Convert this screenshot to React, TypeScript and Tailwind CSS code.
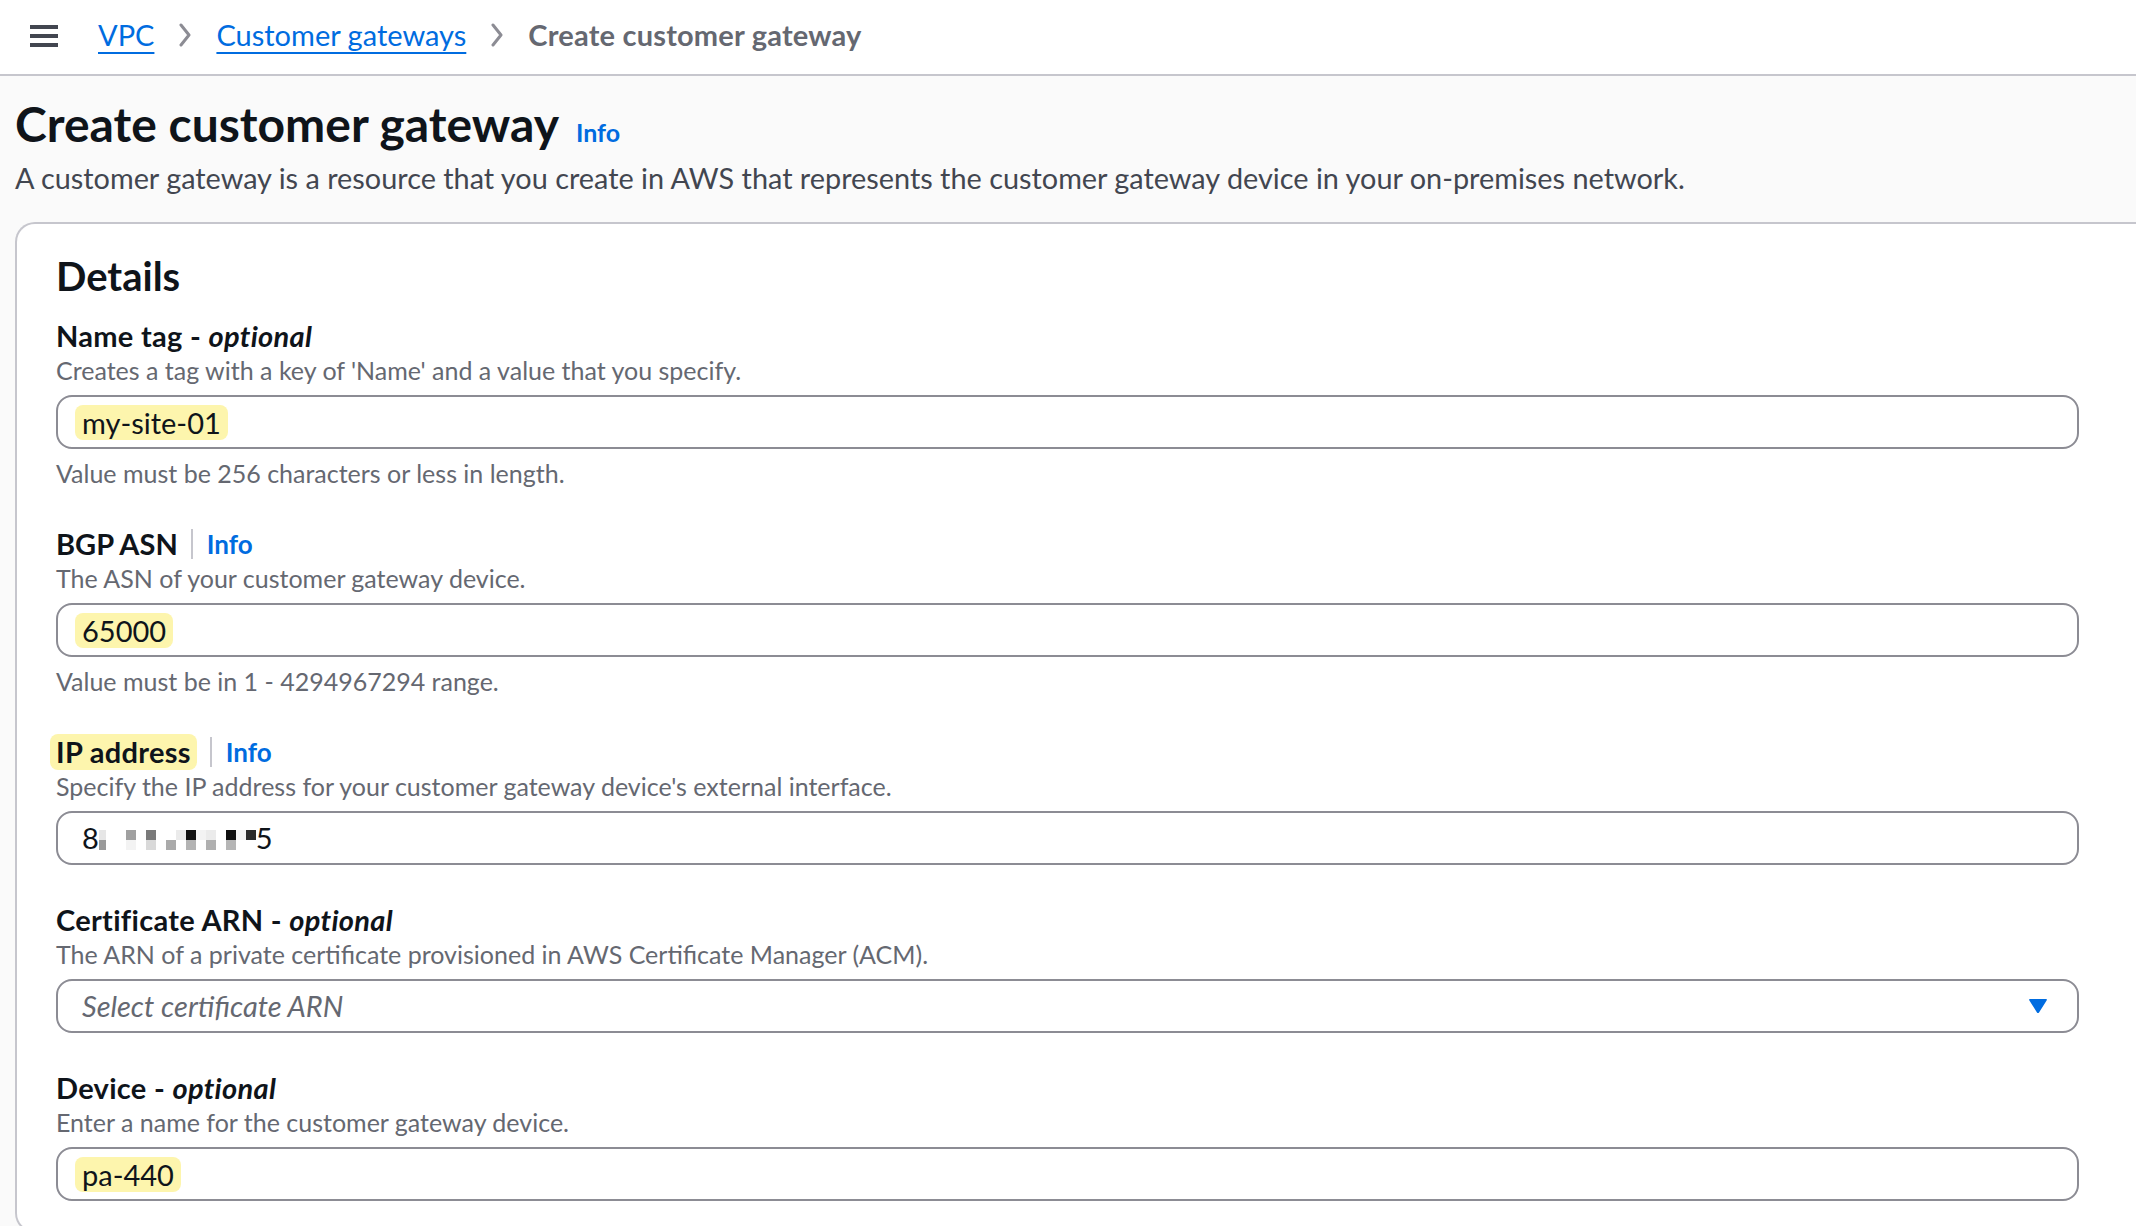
import React from "react";

const Chevron = () => (
  <svg width="14" height="24" viewBox="0 0 14 24" className="mx-[24px]" aria-hidden>
    <path d="M3 2 L11 12 L3 22" fill="none" stroke="#8c8c94" strokeWidth="3" strokeLinecap="round" strokeLinejoin="round" />
  </svg>
);

const Hl = ({ children }: { children: React.ReactNode }) => (
  <span className="bg-[#fdf5ad] rounded-[8px] px-[7px] leading-[35px]">{children}</span>
);

const Info = () => <span className="text-[26px] tracking-normal font-bold text-[#006ce0] leading-[36px]">Info</span>;

const Divider = () => <span className="inline-block w-[2px] h-[30px] bg-[#c6c6cd] ml-[13px] mr-[14px]" />;

const Label = ({ children }: { children: React.ReactNode }) => (
  <div className="flex items-center text-[29px] tracking-[0.3px] leading-[36px] font-bold text-[#0f141a] h-[36px]">{children}</div>
);

const Desc = ({ children }: { children: React.ReactNode }) => (
  <div className="text-[25px] leading-[32px] text-[#656871]">{children}</div>
);

const Input = ({ children }: { children: React.ReactNode }) => (
  <div className="mt-[9px] h-[54px] border-2 border-[#8c8c94] rounded-[16px] flex items-center pl-[17px] text-[29px] text-[#0f141a] bg-white">
    {children}
  </div>
);

const Constraint = ({ children }: { children: React.ReactNode }) => (
  <div className="mt-[8px] text-[25px] leading-[32px] text-[#656871]">{children}</div>
);

// mosaic columns: [x offset from start, top color, bottom color, width]
const mosaic: [number, string | null, string | null, number][] = [
  [0, "#e6e6e6", "#9a9a9a", 7],
  [27, "#a0a0a0", "#f3f3f3", 10],
  [47, "#7a7a7a", "#d9d9d9", 10],
  [67, null, "#aaaaaa", 10],
  [77, "#ebebeb", null, 10],
  [87, "#111111", "#b3b3b3", 10],
  [97, "#f3f3f3", null, 10],
  [107, "#ebebeb", "#b0b0b0", 10],
  [127, "#0f0f0f", "#b5b5b5", 10],
  [137, "#f3f3f3", null, 10],
  [147, "#2b2b2b", null, 10],
];

const Mosaic = () => (
  <span className="relative inline-block w-[157px] h-[20px] mt-[4px]">
    {mosaic.map(([x, t, b, w], i) => (
      <React.Fragment key={i}>
        {t && <span className="absolute top-0 h-[10px]" style={{ left: x, width: w, background: t }} />}
        {b && <span className="absolute top-[10px] h-[10px]" style={{ left: x, width: w, background: b }} />}
      </React.Fragment>
    ))}
  </span>
);

export default function App() {
  return (
    <div className="h-[1226px] w-[2136px] overflow-hidden bg-[#fafafa] [font-family:Lato,'Noto_Sans',sans-serif]">
      <header className="h-[76px] bg-white border-b-2 border-[#c6c6cd] flex items-center pl-[30px]">
        <svg width="28" height="24" viewBox="0 0 28 24" aria-hidden className="mt-[-2px]">
          <rect x="0" y="1" width="28" height="4" fill="#424650" />
          <rect x="0" y="10" width="28" height="4" fill="#424650" />
          <rect x="0" y="19" width="28" height="4" fill="#424650" />
        </svg>
        <nav className="flex items-center ml-[40px] text-[29px] leading-[40px] mt-[-4px]">
          <span className="text-[#006ce0] underline decoration-2 underline-offset-[6px]">VPC</span>
          <Chevron />
          <span className="text-[#006ce0] underline decoration-2 underline-offset-[6px]">Customer gateways</span>
          <Chevron />
          <span className="text-[#656871] font-bold tracking-[0.2px]">Create customer gateway</span>
        </nav>
      </header>

      <div className="pl-[15px]">
        <div className="pt-[20px] flex items-baseline">
          <h1 className="text-[48px] leading-[56px] font-bold text-[#0f141a]">Create customer gateway</h1>
          <span className="ml-[17px] text-[25px] font-bold text-[#006ce0]">Info</span>
        </div>
        <p className="mt-[6px] text-[28.85px] leading-[40px] text-[#424650]">
          A customer gateway is a resource that you create in AWS that represents the customer gateway device in your on-premises network.
        </p>

        <div className="mt-[24px] -mr-[30px] bg-white border-t-2 border-l-2 border-b-2 border-[#c6c6cd] rounded-l-[20px] pl-[39px] pr-[87px] pt-[30px] pb-[30px]">
          <h2 className="text-[40px] leading-[44px] font-bold text-[#0f141a]">Details</h2>

          <div className="mt-[20px]">
            <Label>
              Name tag -&nbsp;<i>optional</i>
            </Label>
            <Desc>Creates a tag with a key of 'Name' and a value that you specify.</Desc>
            <Input>
              <Hl>my-site-01</Hl>
            </Input>
            <Constraint>Value must be 256 characters or less in length.</Constraint>
          </div>

          <div className="mt-[37px]">
            <Label>
              <span className="tracking-normal">BGP ASN</span>
              <Divider />
              <Info />
            </Label>
            <Desc>The ASN of your customer gateway device.</Desc>
            <Input>
              <Hl>65000</Hl>
            </Input>
            <Constraint>Value must be in 1 - 4294967294 range.</Constraint>
          </div>

          <div className="mt-[37px]">
            <Label>
              <span className="bg-[#fdf5ad] rounded-[8px] px-[6px] -ml-[6px]">IP address</span>
              <Divider />
              <Info />
            </Label>
            <Desc>Specify the IP address for your customer gateway device's external interface.</Desc>
            <Input>
              <span className="pl-[7px] flex items-center">
                <span>8</span>
                <Mosaic />
                <span>5</span>
              </span>
            </Input>
          </div>

          <div className="mt-[37px]">
            <Label>
              Certificate ARN -&nbsp;<i>optional</i>
            </Label>
            <Desc>The ARN of a private certificate provisioned in AWS Certificate Manager (ACM).</Desc>
            <div className="mt-[9px] h-[54px] border-2 border-[#8c8c94] rounded-[16px] flex items-center justify-between pl-[24px] pr-[29px] text-[29px] bg-white">
              <span className="italic text-[#656871]">Select certificate ARN</span>
              <svg width="20" height="16" viewBox="0 0 20 16" aria-hidden>
                <path d="M2 1 H18 Q19.5 1 18.6 2.4 L11.2 14.2 Q10 16 8.8 14.2 L1.4 2.4 Q0.5 1 2 1 Z" fill="#006ce0" />
              </svg>
            </div>
          </div>

          <div className="mt-[37px]">
            <Label>
              Device -&nbsp;<i>optional</i>
            </Label>
            <Desc>Enter a name for the customer gateway device.</Desc>
            <Input>
              <Hl>pa-440</Hl>
            </Input>
          </div>
        </div>
      </div>
    </div>
  );
}
